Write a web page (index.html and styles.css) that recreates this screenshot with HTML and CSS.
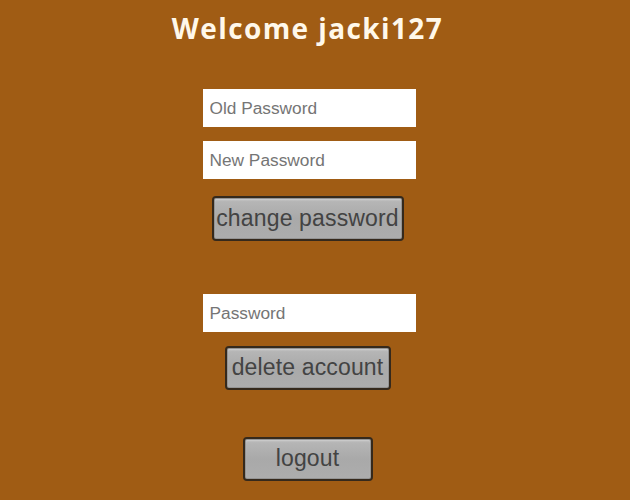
FILE: index.html
```html
<!DOCTYPE html>
<html lang="en">
<head>
    <meta charset="UTF-8">
    <meta name="viewport" content="width=device-width, initial-scale=1.0">
    <title>Account</title>
    <link rel="stylesheet" href="styles.css">
</head>
<body>
    <div class="page">
        <h1 class="welcome">Welcome jacki127</h1>

        <form class="account-form change-form">
            <input type="password" class="text-field" placeholder="Old Password">
            <input type="password" class="text-field" placeholder="New Password">
            <button type="button" class="game-button change-button">change password</button>
        </form>

        <form class="account-form delete-form">
            <input type="password" class="text-field" placeholder="Password">
            <button type="button" class="game-button delete-button">delete account</button>
        </form>

        <button type="button" class="game-button logout-button">logout</button>
    </div>
</body>
</html>
```

FILE: styles.css
```css
body {
    margin: 0;
    overflow: hidden;
    background-color: #a05c14;
    font-family: "Liberation Sans", Arial, sans-serif;
}

.page {
    width: 615px;
    height: 500px;
    display: flex;
    flex-direction: column;
    align-items: center;
}

.welcome {
    margin: 10px 0 0;
    height: 37px;
    color: #fff8ea;
    font-family: "Open Sans", sans-serif;
    font-size: 28px;
    line-height: 37px;
    font-weight: 700;
    letter-spacing: 1.4px;
    white-space: nowrap;
}

.account-form {
    display: flex;
    flex-direction: column;
    align-items: center;
}

.change-form {
    margin-top: 42px;
}

.delete-form {
    margin-top: 53px;
}

.text-field {
    width: 213px;
    height: 38px;
    margin: 0 0 14px 3px;
    padding: 0 7px;
    box-sizing: border-box;
    border: none;
    border-radius: 0;
    background: #fff;
    font-family: "Liberation Sans", Arial, sans-serif;
    font-size: 17.3px;
}

.text-field::placeholder {
    color: #757575;
    opacity: 1;
}

.game-button {
    display: block;
    height: 44px;
    padding: 0 0 1px;
    box-sizing: border-box;
    border: 2px solid #35291c;
    border-radius: 4px;
    background: linear-gradient(#b8b8b8, #a9a9a9 50%, #adadad);
    box-shadow: inset 0 0 0 1px #949494, inset 0 2px 2px #d0d0d0;
    color: #434343;
    font-family: "Liberation Sans", Arial, sans-serif;
    font-size: 23px;
    letter-spacing: 0.15px;
    white-space: nowrap;
}

.change-button {
    width: 192px;
    height: 45px;
    margin-top: 3px;
}

.delete-button {
    width: 166px;
}

.logout-button {
    width: 130px;
    margin-top: 47px;
}
```
